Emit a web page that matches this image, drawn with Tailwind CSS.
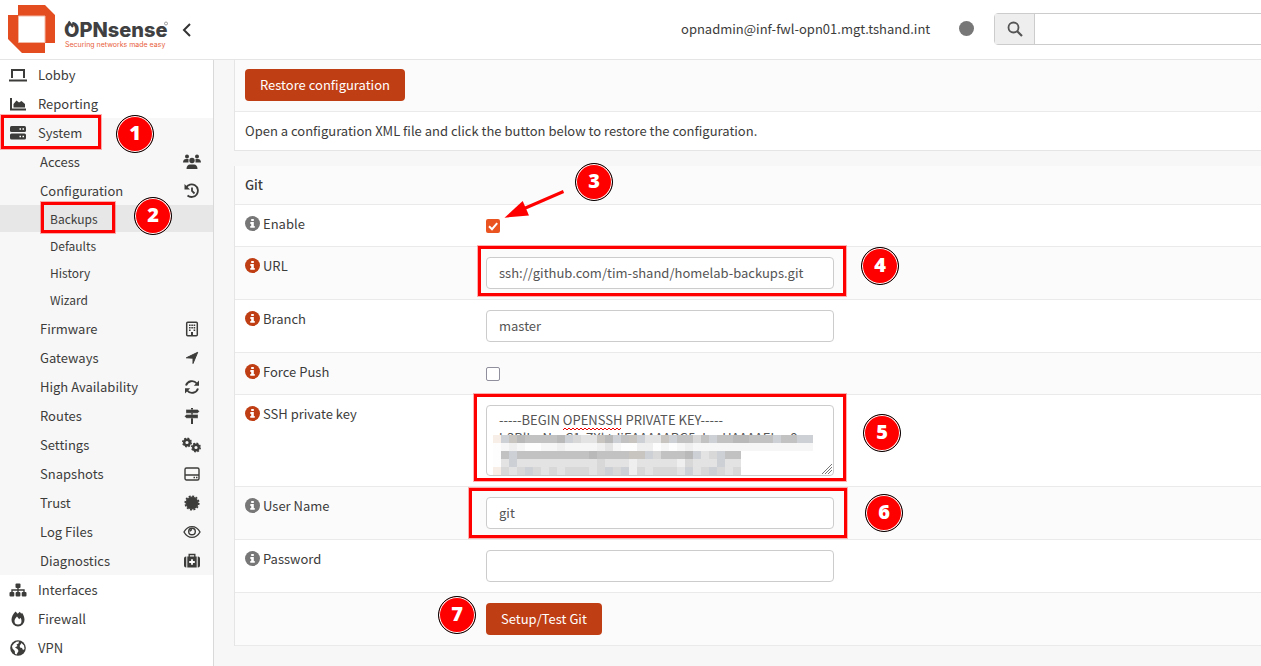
<!DOCTYPE html>
<html lang="en">
  <head>
    <title>Backups | Configuration | System | OPNsense</title>
    <meta charset="UTF-8">
    <meta name="viewport" content="width=device-width, initial-scale=1.0">
    <script src="https://cdn.jsdelivr.net/npm/@tailwindcss/browser@4"></script>
  </head>
  <body class="relative min-h-screen overflow-hidden bg-[#f7f7f7] font-['Noto_Sans_CJK_SC','Noto_Sans',sans-serif] text-[13px] leading-5 text-[#3c3c3b]">
    <!-- icons shared by the form rows -->
    <svg class="hidden">
      <symbol id="info" viewBox="0 0 16 16">
        <circle cx="8" cy="8" r="8" fill="currentColor"/>
        <path d="M6.600 3.200h2.800v2.200H6.600zM5.700 6.500h3.700v4.200h1v1.900H5.600v-1.900h1V8.400h-.9z" fill="#fff"/>
      </symbol>
    </svg>

    <header class="flex h-[60px] items-center overflow-hidden border-b border-[#e5e5e5] bg-white">
      <a href="#" class="shrink-0" aria-label="OPNsense">
        <svg width="170" height="59" viewBox="0 0 170 59">
          <path d="M18 5h27l10 10v28H45v10H22L8 39V15h10z" fill="#e44d20"/>
          <path d="M18.500 16H45v26.500H18.500z" fill="#fff" stroke="#f3b8a4"/>
          <text x="64" y="37" font-family="Inter, sans-serif" font-weight="800" font-size="20" fill="#403f41">OPNsense</text>
          <path d="M65 21l4-1 3.500 1.500-.5 3z" fill="#fff"/>
          <path d="M68.500 21.500l4.500 5.500" stroke="#403f41" stroke-width="2.200"/>
          <circle cx="166" cy="23.500" r="1.500" fill="none" stroke="#777" stroke-width=".7"/>
          <text x="65" y="47" font-family="Inter, sans-serif" font-size="7" fill="#e8613c">Securing networks made easy</text>
        </svg>
      </a>
      <button class="ml-3 shrink-0" aria-label="Collapse menu">
        <svg width="10" height="14" viewBox="0 0 10 14" fill="none" stroke="#333" stroke-width="2"><path d="M8 1L2 7l6 6"/></svg>
      </button>
      <div class="ml-auto flex w-[580px] shrink-0 items-center pb-0.5">
        <span class="w-[278px] shrink-0">opnadmin@inf-fwl-opn01.mgt.tshand.int</span>
        <span class="size-[15px] shrink-0 rounded-full bg-[#777]"></span>
        <form class="ml-5 flex h-8 w-[320px] shrink-0 rounded-sm border border-[#ccc] bg-white">
          <button type="button" aria-label="Search" class="flex w-10 items-center justify-center border-r border-[#ccc] bg-[#eee]">
            <svg width="16" height="16" viewBox="0 0 16 16" fill="none" stroke="#555" stroke-width="1.800"><circle cx="6.500" cy="6.500" r="5"/><path d="M10 10l5 5" stroke-width="2.200"/></svg>
          </button>
          <input type="text" aria-label="Search" class="min-w-0 flex-1 px-3 outline-none">
        </form>
      </div>
    </header>

    <div class="flex">
      <nav class="w-[214px] shrink-0 border-r border-[#d9d9d9] bg-white pb-2">
        <a href="#" class="flex h-[29px] items-center gap-[11px] px-[9px]">
          <svg class="size-[18px]" viewBox="0 0 18 18" fill="none" stroke="currentColor" stroke-width="2"><path d="M3 12V4h12v8M0 14.500h18"/></svg>Lobby
        </a>
        <a href="#" class="flex h-[29px] items-center gap-[11px] px-[9px]">
          <svg class="size-[18px]" viewBox="0 0 18 18" fill="currentColor"><path d="M1 3h2v10.500h14v2H1z"/><path d="M4.500 12.500V9l3-3.500L10 7.500 12.500 6l3.500 3v3.500z"/></svg>Reporting
        </a>
        <div class="bg-[#f7f7f7]">
          <a href="#" class="flex h-[29px] items-center gap-[11px] px-[9px]">
            <svg class="size-[18px]" viewBox="0 0 18 18"><rect x="1" y="2" width="16" height="6" rx="1.500" fill="currentColor"/><rect x="1" y="9.500" width="16" height="6" rx="1.500" fill="currentColor"/><path d="M10.500 5H12m1.500 0H15M10.500 12.500H12m1.500 0H15" stroke="#fff" stroke-width="1.300"/></svg>System
          </a>
          <a href="#" class="flex h-[29px] items-center justify-between pr-3 pl-10">Access
            <svg class="h-4 w-[18px]" viewBox="0 0 18 16" fill="currentColor"><circle cx="4" cy="2.500" r="2"/><circle cx="14" cy="2.500" r="2"/><circle cx="9" cy="6.500" r="2.700"/><path d="M0 8.500C0 6 1.500 5 3 5h2.500v3.500zM18 8.500C18 6 16.500 5 15 5h-2.500v3.500zM3.500 15c0-3 1.500-4.500 3.500-4.500h4c2 0 3.500 1.500 3.500 4.500z"/></svg>
          </a>
          <a href="#" class="flex h-[29px] items-center justify-between pr-[13px] pl-10">Configuration
            <svg class="size-4" viewBox="0 0 16 16" fill="none" stroke="currentColor" stroke-width="1.800"><path d="M2 4.800A6.300 6.300 0 1 1 3.500 12.500M8 4.500V8l2.500 2.500"/><path d="M.5 1v5.500H6z" fill="currentColor" stroke="none"/></svg>
          </a>
          <div class="grid h-[109px] grid-rows-4 text-[12px]">
            <a href="#" class="flex items-center bg-[#e7e7e7] pl-[50px]">Backups</a>
            <a href="#" class="flex items-center pl-[50px]">Defaults</a>
            <a href="#" class="flex items-center pl-[50px]">History</a>
            <a href="#" class="flex items-center pl-[50px]">Wizard</a>
          </div>
          <a href="#" class="flex h-[29px] items-center justify-between pr-[13px] pl-10">Firmware
            <svg class="size-4" viewBox="0 0 16 16"><rect x="2.700" y="1.200" width="10.600" height="13.600" rx="1" fill="none" stroke="currentColor" stroke-width="1.500"/><path d="M5 3.500h1.600v1.600H5zm2.300 0h1.600v1.600H7.300zm2.300 0h1.600v1.600H9.600zM5 6h1.600v1.600H5zm2.300 0h1.600v1.600H7.300zm2.300 0h1.600v1.600H9.600zM5 8.500h1.600v1.600H5zm4.600 0h1.600v1.600H9.600zM7 11h2v4H7z" fill="currentColor"/></svg>
          </a>
          <a href="#" class="flex h-[29px] items-center justify-between pr-[13px] pl-10">Gateways
            <svg class="size-4" viewBox="0 0 16 16" fill="currentColor"><path d="M13.700 2.300L9 13.500V8.200L2.300 7.800z" stroke="currentColor" stroke-linejoin="round"/></svg>
          </a>
          <a href="#" class="flex h-[29px] items-center justify-between pr-[13px] pl-10">High Availability
            <svg class="size-4" viewBox="0 0 16 16" fill="none" stroke="currentColor" stroke-width="1.900"><path d="M2 6.500A6.200 6.200 0 0 1 12.800 4.500M14 9.500A6.200 6.200 0 0 1 3.200 11.500"/><path d="M15 1.500v5.200H9.800zM1 14.500V9.300h5.200z" fill="currentColor" stroke="none"/></svg>
          </a>
          <a href="#" class="flex h-[29px] items-center justify-between pr-[13px] pl-10">Routes
            <svg class="size-4" viewBox="0 0 16 16" fill="currentColor"><path d="M7 0h2v16H7z"/><path d="M2 1.500h11.500L15.500 3.300 13.500 5.200H2zM14 6.500H2.500L.5 8.300l2 1.900H14z" stroke="#f7f7f7" stroke-width=".3"/></svg>
          </a>
          <a href="#" class="flex h-[29px] items-center justify-between pr-3 pl-10">Settings
            <svg class="h-4 w-[19px]" viewBox="0 0 19 16" fill="none" stroke="currentColor"><circle cx="5" cy="5.500" r="2.800" stroke-width="2.400"/><circle cx="5" cy="5.500" r="4.300" stroke-width="1.400" stroke-dasharray="1.800 1.580"/><circle cx="14" cy="10.500" r="2.800" stroke-width="2.400"/><circle cx="14" cy="10.500" r="4.300" stroke-width="1.400" stroke-dasharray="1.800 1.580"/></svg>
          </a>
          <a href="#" class="flex h-[29px] items-center justify-between pr-[13px] pl-10">Snapshots
            <svg class="size-4" viewBox="0 0 16 16" fill="none" stroke="currentColor" stroke-width="1.400"><rect x="1" y="2" width="14" height="12" rx="1.500"/><path d="M1 9h14M9.500 11.500H11m1 0h1.500"/></svg>
          </a>
          <a href="#" class="flex h-[29px] items-center justify-between pr-[13px] pl-10">Trust
            <svg class="size-4" viewBox="0 0 16 16" fill="none" stroke="currentColor"><circle cx="8" cy="8" r="6" fill="currentColor"/><circle cx="8" cy="8" r="6.800" stroke-width="1.600" stroke-dasharray="2 1.560"/></svg>
          </a>
          <a href="#" class="flex h-[29px] items-center justify-between pr-3 pl-10">Log Files
            <svg class="h-4 w-[18px]" viewBox="0 0 18 16" fill="none" stroke="currentColor" stroke-width="1.400"><path d="M1 8C5 .8 13 .8 17 8 13 15.200 5 15.200 1 8z"/><circle cx="9" cy="7.500" r="3.300"/><path d="M7.200 7.500A1.800 1.800 0 0 1 9 5.700"/></svg>
          </a>
          <a href="#" class="flex h-[29px] items-center justify-between pr-[13px] pl-10">Diagnostics
            <svg class="size-4" viewBox="0 0 16 16"><path d="M2.300 3.500v11H2a2 2 0 0 1-2-2v-7a2 2 0 0 1 2-2zM13.700 3.500v11h.3a2 2 0 0 0 2-2v-7a2 2 0 0 0-2-2zM3.300 3.500h9.400v11H3.300z" fill="currentColor"/><path d="M5.200 4V1.500h5.600V4" fill="none" stroke="currentColor" stroke-width="1.400"/><path d="M8 6.200v5.600M5.200 9h5.600" stroke="#fff" stroke-width="1.800"/></svg>
          </a>
        </div>
        <a href="#" class="flex h-[29px] items-center gap-[11px] px-[9px]">
          <svg class="size-[18px]" viewBox="0 0 18 18" fill="currentColor"><rect x="6.500" y="2.500" width="5" height="4.500" rx="1"/><rect x=".5" y="11" width="4.800" height="4.500" rx="1"/><rect x="6.600" y="11" width="4.800" height="4.500" rx="1"/><rect x="12.700" y="11" width="4.800" height="4.500" rx="1"/><path d="M3 11.500V9h12v2.500M9 5.500v6" fill="none" stroke="currentColor" stroke-width="1.400"/></svg>Interfaces
        </a>
        <a href="#" class="flex h-[29px] items-center gap-[11px] px-[9px]">
          <svg class="size-[18px]" viewBox="-.5 -.5 18 18" fill="currentColor"><path fill-rule="evenodd" d="M6 1c1 .8 1.600 1.500 2.200 2.300C9 2.300 9.500 1.800 10.300 1.200c.5.600 1 1.200 1.400 2l.8-.9C14.200 4.500 15 7 15 9.300A6.500 6.500 0 0 1 8.500 16 6.500 6.500 0 0 1 2 9.300C2 6.500 3.500 3.500 6 1zM5 10.500a3.500 3.500 0 0 0 7 0c0-1.300-.4-2.400-1-3.300L9.700 8.800 7.500 6C6 7.700 5 9 5 10.500z"/></svg>Firewall
        </a>
        <a href="#" class="flex h-[29px] items-center gap-[11px] px-[9px]">
          <svg class="size-[18px]" viewBox="-1 -.5 18 18"><circle cx="8" cy="8.500" r="7.800" fill="currentColor"/><path d="M6.500 2.200L9 2l-.5 2L6.500 5l1 1.500L5 8l2.500 1.500 1 2-2 3.500L5 14.200 4.800 11.500 2.500 9 2 6.500 4 4zM11.500 3.500l2.500 2.500.5 3.500-1.500 1-1-2-2-.5-.3-1.800z" fill="#fff"/></svg>VPN
        </a>
      </nav>

      <main class="min-w-0 flex-1 pl-5">
        <section class="border-b border-l border-[#e5e5e5] bg-white">
          <div class="border-b border-[#eaeaea] bg-[#fbfbfb] px-2.5 pt-[9px] pb-2.5">
            <button class="block h-8 rounded-sm bg-[#c03e14] px-[15px] text-white">Restore configuration</button>
          </div>
          <p class="px-2.5 py-[9px]">Open a configuration XML file and click the button below to restore the configuration.</p>
        </section>

        <form class="mt-[15px] border-l border-[#e5e5e5]">
          <table class="w-full table-fixed border-collapse bg-white text-left align-top [&_td]:px-2.5 [&_td]:pt-2.5 [&_td]:align-top [&_th]:px-2.5 [&_th]:pt-[9px] [&_th]:align-top [&_th]:font-normal [&_tr]:border-b [&_tr]:border-[#eaeaea] [&_tr:nth-child(odd)]:bg-[#fbfbfb]">
            <colgroup><col class="w-[241px]"><col></colgroup>
            <tbody>
              <tr class="h-[38px]"><th colspan="2"><b class="font-medium">Git</b></th></tr>
              <tr class="h-[42px]">
                <th><label for="enable" class="flex items-center gap-[3px]"><svg class="size-[15px] text-[#777]"><use href="#info"/></svg>Enable</label></th>
                <td><input id="enable" type="checkbox" checked class="hidden"><label for="enable" class="mt-1 block size-3.5 rounded-xs bg-[#e95420]"><svg viewBox="0 0 14 14" fill="none" stroke="#fff" stroke-width="2"><path d="M3 7.200l3 3 5.200-6"/></svg></label></td>
              </tr>
              <tr class="h-[53px]">
                <th><label for="url" class="flex items-center gap-[3px]"><svg class="size-[15px] text-[#c03e14]"><use href="#info"/></svg>URL</label></th>
                <td><input id="url" type="text" value="ssh://github.com/tim-shand/homelab-backups.git" class="block h-8 w-[348px] rounded-sm border border-[#ccc] bg-white px-3 text-[#555]"></td>
              </tr>
              <tr class="h-[53px]">
                <th><label for="branch" class="flex items-center gap-[3px]"><svg class="size-[15px] text-[#c03e14]"><use href="#info"/></svg>Branch</label></th>
                <td><input id="branch" type="text" value="master" class="block h-8 w-[348px] rounded-sm border border-[#ccc] bg-white px-3 text-[#555]"></td>
              </tr>
              <tr class="h-[42px]">
                <th><label for="force" class="flex items-center gap-[3px]"><svg class="size-[15px] text-[#c03e14]"><use href="#info"/></svg>Force Push</label></th>
                <td><input id="force" type="checkbox" class="mt-1 block size-3.5 appearance-none rounded-xs border border-[#8f8f9d] bg-white"></td>
              </tr>
              <tr class="h-[92px]">
                <th><label for="key" class="flex items-center gap-[3px]"><svg class="size-[15px] text-[#c03e14]"><use href="#info"/></svg>SSH private key</label></th>
                <td>
                  <div class="relative w-[348px]">
                    <textarea id="key" spellcheck="false" class="block h-[71px] w-full resize-none overflow-hidden rounded-sm border border-[#ccc] bg-white px-3 py-[5px] leading-[18px] text-[#555]">-----BEGIN OPENSSH PRIVATE KEY-----
b3BlbnNzaC1rZXktdjEAAAAABG5vbmUAAAAEbm9</textarea>
                    <svg class="absolute top-[22px] left-[77px]" width="58" height="4" fill="none" stroke="#e00"><path id="squiggle"/></svg>
                    <svg id="mosaic" class="absolute top-[30px] left-[7px]" width="322" height="40" shape-rendering="crispEdges"></svg>
                    <svg class="absolute right-0.5 bottom-0.5" width="10" height="10" stroke="#777"><path d="M0 10L10 0M3 10l7-7M6 10l4-4"/></svg>
                  </div>
                </td>
              </tr>
              <tr class="h-[53px]">
                <th><label for="user" class="flex items-center gap-[3px]"><svg class="size-[15px] text-[#777]"><use href="#info"/></svg>User Name</label></th>
                <td><input id="user" type="text" value="git" class="block h-8 w-[348px] rounded-sm border border-[#ccc] bg-white px-3 text-[#555]"></td>
              </tr>
              <tr class="h-[53px]">
                <th><label for="password" class="flex items-center gap-[3px]"><svg class="size-[15px] text-[#777]"><use href="#info"/></svg>Password</label></th>
                <td><input id="password" type="password" class="block h-8 w-[348px] rounded-sm border border-[#ccc] bg-white px-3 text-[#555]"></td>
              </tr>
              <tr class="h-[53px]">
                <td></td>
                <td><button type="button" class="block h-8 rounded-sm bg-[#c03e14] px-[15px] text-white">Setup/Test Git</button></td>
              </tr>
            </tbody>
          </table>
        </form>
      </main>
    </div>

    <!-- walkthrough marks drawn over the page -->
    <div class="pointer-events-none absolute inset-0 font-['Noto_Sans',sans-serif] text-[20px] font-bold text-white [&>b]:absolute [&>b]:flex [&>b]:size-[38px] [&>b]:items-center [&>b]:justify-center [&>b]:rounded-full [&>b]:border [&>b]:border-black [&>b]:bg-[#f00] [&>b]:pb-0.5 [&>b]:inset-ring [&>b]:inset-ring-white [&>i]:absolute [&>i]:border-3 [&>i]:border-[#f00] [&>i]:outline [&>i]:outline-[#f00]/30">
      <i class="top-[115px] left-[1px] h-[34px] w-[100px]"></i>
      <i class="top-[202px] left-[41px] h-[31px] w-[74px]"></i>
      <i class="top-[246px] left-[478px] h-[50px] w-[368px]"></i>
      <i class="top-[394px] left-[474px] h-[87px] w-[372px]"></i>
      <i class="top-[488px] left-[469px] h-[50px] w-[378px]"></i>
      <b class="top-[115px] left-[116px]">1</b>
      <b class="top-[197px] left-[134px]">2</b>
      <b class="top-[163px] left-[575px]">3</b>
      <b class="top-[247px] left-[861px]">4</b>
      <b class="top-[414px] left-[863px]">5</b>
      <b class="top-[494px] left-[865px]">6</b>
      <b class="top-[596px] left-[438px]">7</b>
      <svg class="absolute top-[188px] left-[500px]" width="68" height="34" viewBox="500 188 68 34"><path d="M563.500 191.500L522 209.500" stroke="#f00" stroke-width="3"/><path d="M504.500 217.700l18.200-16.700 6.300 14.400z" fill="#f00"/></svg>
    </div>

    <script>
      // one letter per 8px cell
      let tones = {a: "#f7eee7", b: "#c2c2c2", c: "#cdd1d5", d: "#d8d8d8", e: "#e3e3e3", f: "#efefef", g: "#f6f6f6", h: "#c8c4bf", k: "#b9b9b9", w: "#fdfdfd"};
      let rows = [
        "achkbbbbkcdeehkcbhceehcbbdbcbbkkbbbcbbcc",
        "wgfgwwggfggggfegwwffwgwgfggggggggggggggg",
        "wbcbbbbbbbbbkbbbbhhcdbbbkcedcbb",
        "weceeeeeeeeeedeeefeeeeefdeeecee",
        "adedcdededddedcdcfdedddecedcded"
      ];
      document.getElementById("mosaic").innerHTML = rows.map((row, y) =>
        [...row].map((t, x) => `<rect x="${x * 8}" y="${y * 8}" width="8" height="8" fill="${tones[t]}"/>`).join("")
      ).join("");

      let wave = "M0 3";
      for(let x = 2; x <= 58; x += 2){
        wave += `L${x} ${x % 4 ? 1 : 3}`;
      }
      document.getElementById("squiggle").setAttribute("d", wave);
    </script>
  </body>
</html>
